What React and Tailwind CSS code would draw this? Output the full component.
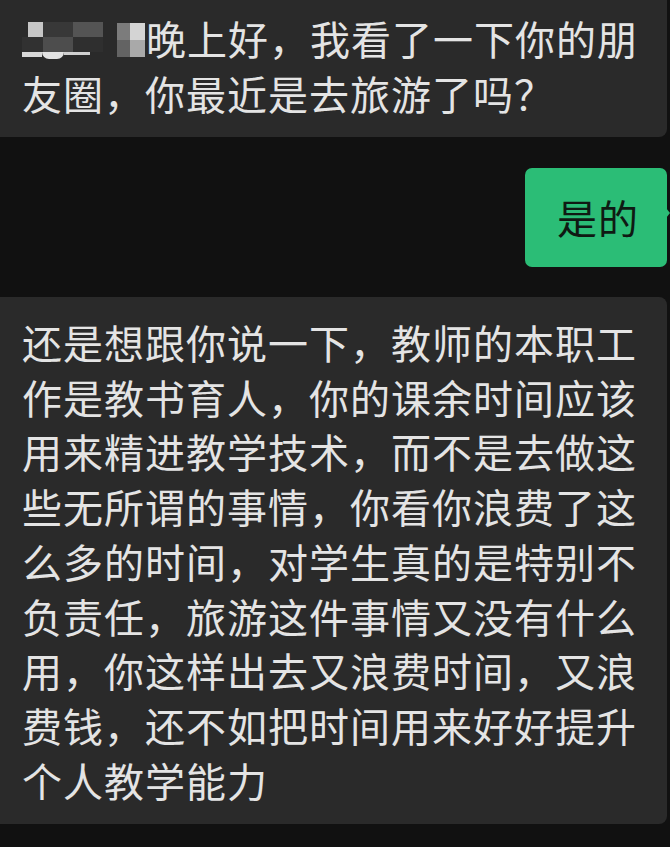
import React from "react";

const longLines = [
  "还是想跟你说一下，教师的本职工",
  "作是教书育人，你的课余时间应该",
  "用来精进教学技术，而不是去做这",
  "些无所谓的事情，你看你浪费了这",
  "么多的时间，对学生真的是特别不",
  "负责任，旅游这件事情又没有什么",
  "用，你这样出去又浪费时间，又浪",
  "费钱，还不如把时间用来好好提升",
  "个人教学能力",
];

// pixelated name (blurred out in the screenshot)
function Mosaic() {
  return (
    <div className="flex h-[55px] w-[124px] shrink-0 pt-[11px]">
      <div className="flex w-[82px] flex-col">
        <div className="flex h-[15px]">
          <div className="w-[6px] bg-[#2a2a2a]" />
          <div className="w-[15px] bg-[#c6c6c6]" />
          <div className="w-[30px] bg-[#383838]" />
          <div className="w-[30px] bg-[#545454]" />
        </div>
        <div className="flex h-[15px]">
          <div className="w-[21px] bg-[#313131]" />
          <div className="w-[30px] bg-[#4d4d4d]" />
          <div className="w-[30px] bg-[#2f2f2f]" />
        </div>
        <div className="flex h-[7px] items-start">
          <div className="h-[5px] w-[20px] bg-[#d8d8d8]" />
          <div className="h-[7px] w-[22px] rounded-b-full bg-[#e2e2e2]" />
          <div className="h-[3px] w-[26px] bg-[#d0d0d0]" />
        </div>
      </div>
      <div className="ml-[13px] flex w-[28px] flex-col pt-[1px]">
        <div className="flex h-[17px]">
          <div className="w-[13px] bg-[#7c7c7c]" />
          <div className="w-[15px] bg-[#d4d4d4]" />
        </div>
        <div className="flex h-[17px]">
          <div className="w-[13px] bg-[#636363]" />
          <div className="w-[15px] bg-[#a9a9a9]" />
        </div>
      </div>
    </div>
  );
}

export default function App() {
  return (
    <div
      className="flex h-[847px] w-[670px] flex-col overflow-hidden bg-[#111111] text-[40px] leading-[55px] tracking-[1px] text-[#e4e4e4]"
      style={{ fontFamily: '"Noto Sans CJK SC", "Noto Sans", sans-serif' }}
    >
      {/* incoming message */}
      <div className="mr-[3px] h-[137px] shrink-0 rounded-br-[8px] bg-[#2a2a2a] pl-[22px] pt-[11px]">
        <div className="flex whitespace-nowrap">
          <Mosaic />
          <div>晚上好，我看了一下你的朋</div>
        </div>
        <div className="whitespace-nowrap">友圈，你最近是去旅游了吗？</div>
      </div>

      {/* my reply */}
      <div className="mt-[31px] flex shrink-0 justify-end pr-[3px]">
        <div className="relative flex h-[99px] w-[142px] items-center justify-center rounded-[7px] bg-[#2bbd76] pl-[4px] text-[#0f1a13]">
          是的
          <span className="absolute right-[-3px] top-[40px] h-0 w-0 border-y-[5px] border-l-[4px] border-y-transparent border-l-[#2bbd76]" />
        </div>
      </div>

      {/* long message */}
      <div className="mr-[3px] mt-[30px] h-[527px] shrink-0 rounded-r-[8px] bg-[#2a2a2a] pl-[22px] pt-[18px] leading-[54.7px]">
        {longLines.map((line, i) => (
          <div key={i} className="whitespace-nowrap">
            {line}
          </div>
        ))}
      </div>
    </div>
  );
}
